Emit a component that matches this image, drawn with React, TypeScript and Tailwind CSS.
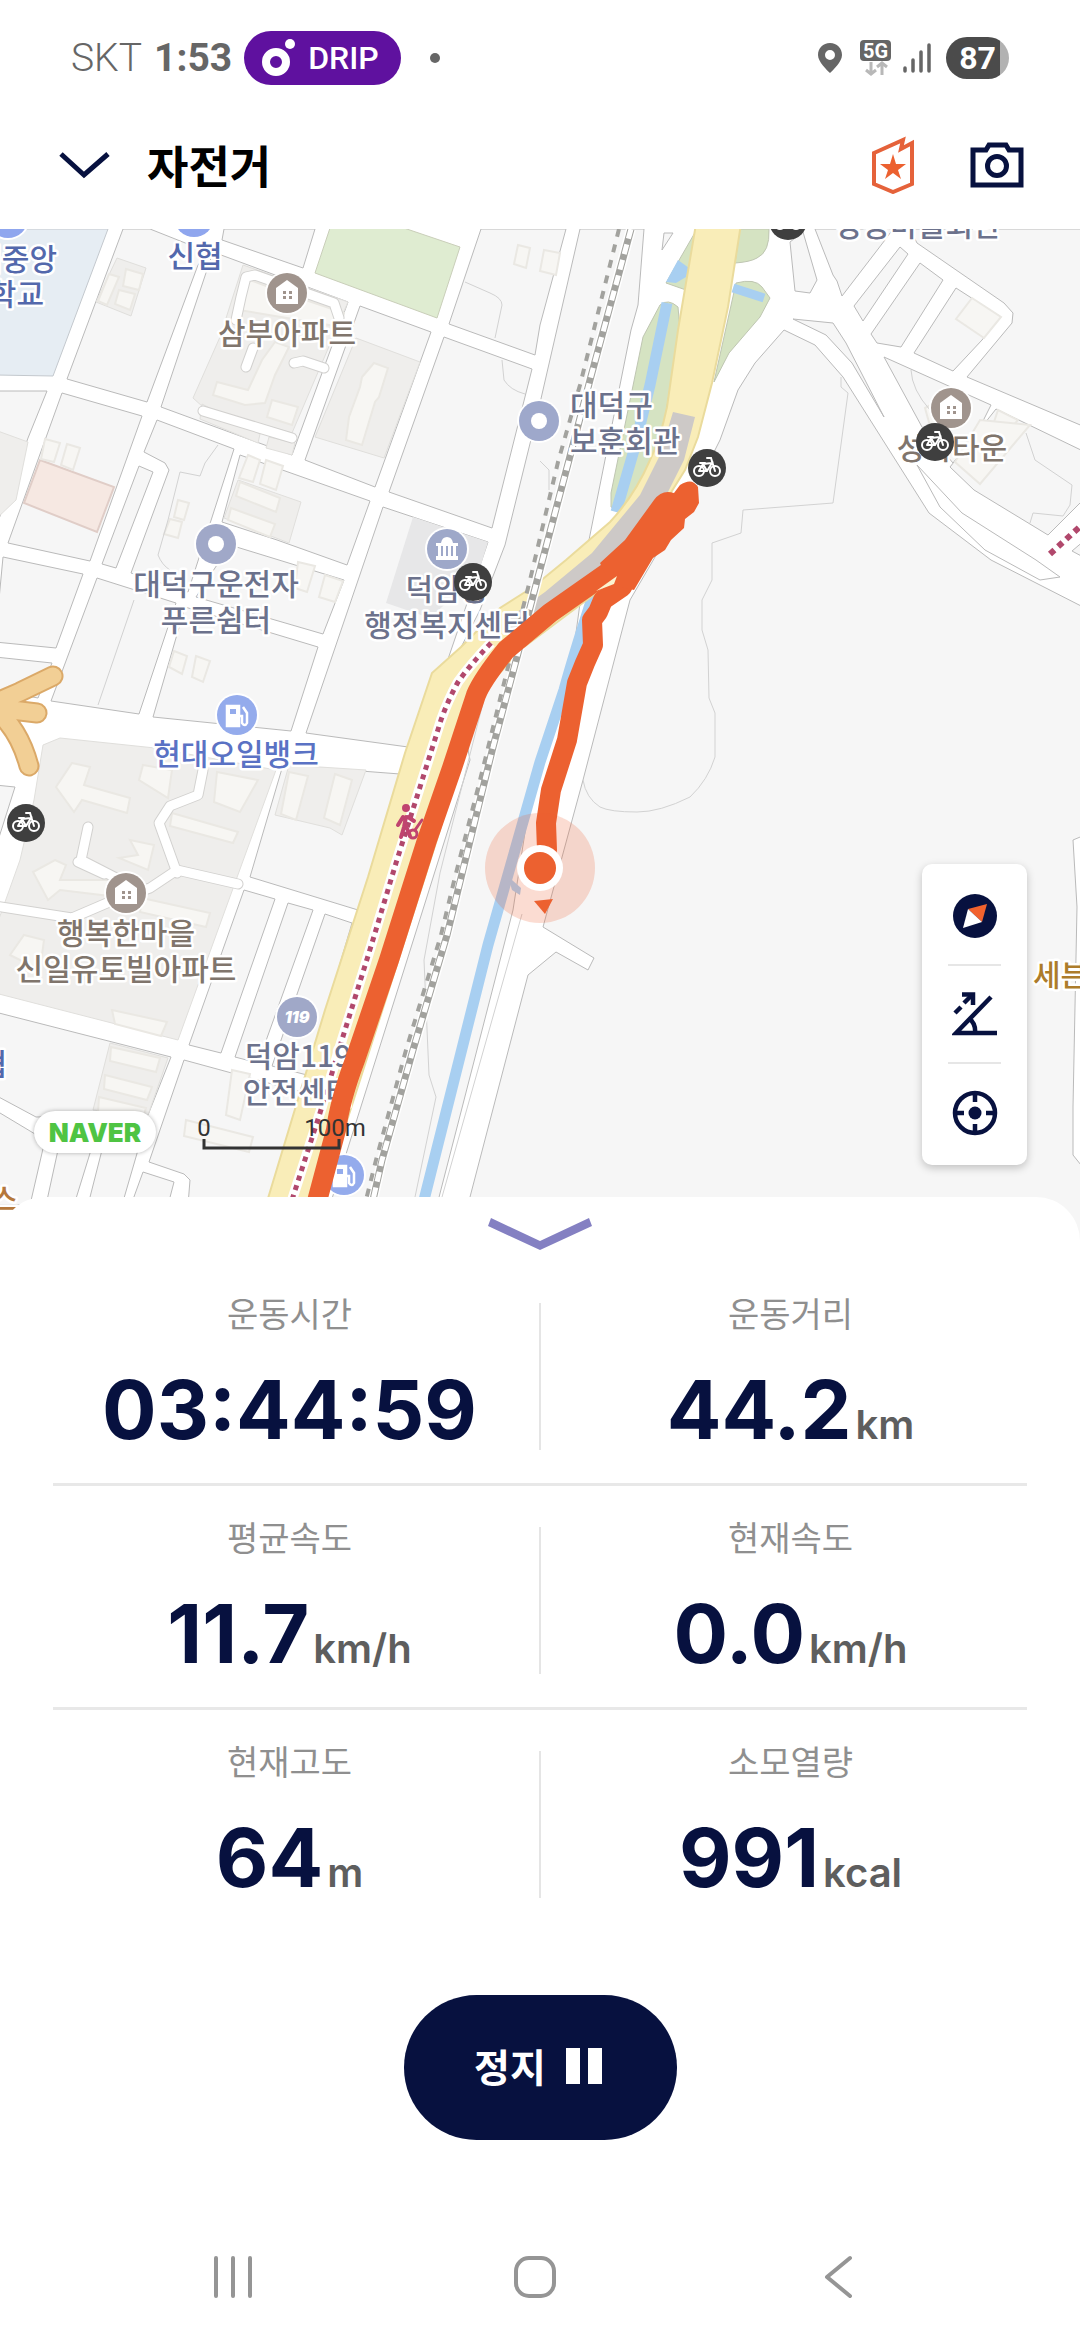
import { ReactNode } from "react";

type StatProps = { label: string; value: string; unit?: string };

type PoiProps = {
  x: number;
  y: number;
  color: string;
  children?: ReactNode;
};

type LabelProps = {
  x: number;
  y: number;
  color: string;
  lines: string[];
  anchor?: "start" | "middle" | "end";
};

const BLOCKS = [
  "123,229 150,229 208,252 198,265 147,402 67,379",
  "161,407 213,252 348,302 292,455",
  "224,229 222,240 303,268 315,229",
  "481,229 449,324 535,355 540,325 566,229",
  "444,337 532,369 492,528 389,492",
  "360,306 431,332 375,487 305,460",
  "-5,391 47,391 28,438 -5,530",
  "62,393 142,416 90,561 8,543",
  "139,466 153,472 116,568 102,564",
  "157,420 234,449 188,592 131,573 169,470 165,463 144,452",
  "240,455 370,501 347,565 277,540 222,522",
  "230,545 344,580 323,634 196,597",
  "383,507 488,542 447,662 430,690 408,747 306,733",
  "3,557 83,574 56,648 -5,642",
  "97,578 176,603 139,714 51,701",
  "-5,657 52,663 38,698 -5,690",
  "185,607 318,647 291,731 153,717",
  "-5,785 15,787 -5,850",
  "283,765 400,774 358,910 250,877",
  "244,890 275,899 221,1053 189,1045",
  "288,903 313,910 258,1063 235,1057",
  "325,914 352,923 307,1075 272,1066",
  "-5,1012 171,1057 148,1115 36,1117 -5,1095",
  "184,1060 305,1093 268,1205 188,1205 190,1180 184,1174 149,1162",
  "-5,1110 45,1140 30,1205 -5,1205",
  "58,1150 91,1150 74,1205 46,1205",
  "102,1150 138,1150 122,1205 88,1205",
  "143,1172 174,1182 168,1205 131,1205",
  "580,229 644,229 638,305 631,330 588,545 575,640 530,800 513,910 437,1205 330,1205 470,760 452,665 480,610 505,545 540,403",
  "784,330 815,345 843,377 929,513 991,560 1085,608 1085,1260 460,1260 470,1197 528,975 556,952 588,970 594,958 543,927 583,780 630,600 655,557 700,480 720,440 738,390 755,363",
  "815,229 833,275 837,281 842,296 885,240 893,229",
  "790,242 803,232 817,280 810,293 795,291",
  "900,247 908,254 863,321 854,306",
  "920,263 943,280 901,347 877,343 871,334",
  "956,288 1001,317 982,340 953,371 914,353",
  "910,229 917,243 1004,303 1013,313 1012,323 967,377 1085,427 1085,229",
  "884,357 991,405 977,433 953,463 922,427",
  "996,409 1085,452 1085,498 1048,535 974,490 950,467",
  "664,233 673,233 662,250",
  "1085,540 1072,551 1085,558",
];

const COMPLEXES = [
  "243,265 348,302 292,433 203,407 193,398 220,337",
  "356,338 420,362 384,458 315,437",
  "117,258 146,268 131,316 96,302",
  "238,480 301,502 289,543 224,518",
  "-5,430 28,442 16,500 -5,520",
  "43,745 60,738 155,748 276,770 178,1040 -5,993 -5,930 20,860 34,800",
  "289,765 366,770 342,835 330,828 275,815",
  "110,1043 168,1058 148,1115 93,1110",
  "202,404 260,434 258,443 200,419",
  "269,437 295,443 292,455 266,448",
];

const BUILDINGS = [
  "250,280 282,292 344,313 341,327 239,310",
  "275,342 289,347 275,375 265,403 245,405 213,395 217,382 248,390 262,360",
  "272,400 298,407 292,425 267,417",
  "374,363 388,368 379,397 375,402 362,445 346,440 349,417 360,387 362,377",
  "109,274 119,277 107,305 98,301",
  "126,269 143,274 139,290 123,286",
  "119,290 135,294 130,310 115,304",
  "240,482 280,498 276,512 236,496",
  "231,508 275,524 270,537 228,520",
  "45,439 60,443 54,462 41,459",
  "67,444 80,448 73,470 61,465",
  "248,455 260,460 253,482 239,478",
  "266,460 283,466 276,490 260,484",
  "178,500 189,503 184,520 174,517",
  "170,519 182,522 178,538 164,534",
  "298,562 315,566 307,592 295,588",
  "325,575 343,581 335,602 319,597",
  "174,651 187,656 182,674 169,667",
  "196,656 210,661 203,682 192,677",
  "72,763 90,767 84,785 130,798 127,813 82,800 74,812 56,787",
  "143,765 172,770 168,798 139,780",
  "172,813 238,832 233,843 170,826",
  "130,840 154,845 148,870 119,858 138,855",
  "217,772 258,780 240,812 214,802",
  "289,772 308,776 296,820 281,814",
  "335,774 352,780 340,825 324,818",
  "55,860 66,865 60,880 110,880 110,896 60,890 48,900 33,872",
  "142,898 210,913 206,927 140,912",
  "24,935 44,940 40,970 10,955",
  "112,1010 167,1022 161,1036 115,1024",
  "111,1047 160,1058 156,1072 110,1061",
  "105,1075 152,1087 147,1100 104,1089",
  "99,1097 146,1108 142,1122 98,1112",
  "186,1120 253,1137 249,1152 184,1136",
  "232,1070 250,1074 240,1120 226,1115",
  "972,298 1001,317 984,338 956,319",
  "544,250 560,253 556,275 540,271",
  "518,245 530,248 526,268 514,264",
  "925,408 940,400 948,420 932,433",
  "998,410 1018,420 1008,432 993,425",
  "980,420 1030,425 980,484 955,462",
];

const SERVICE_ROADS = [
  "M339 318L334 303L255 275L246 277L241 297L236 320",
  "M253 348L246 367",
  "M203 411L292 438",
  "M294 363L303 361L324 368",
  "M203 770L198 795L170 806L159 823L177 873",
  "M88 827L81 860L120 880",
  "M78 862L104 874",
  "M-5 906L72 918L107 903L150 888L177 870L238 884",
];

const FAINT_LINES = [
  "M841 377V387L848 393L833 503L743 510L741 533L712 543V580L702 600V630L708 650L709 698L715 713V757Q708 780 690 797Q660 812 637 812Q610 812 600 807Q586 798 583 780",
  "M483 703L440 873L424 960L429 1075L436 1097L415 1197",
  "M465 282L490 293Q502 298 502 305L495 338",
  "M502 360L504 380Q510 390 525 394",
  "M218 445L205 463L200 476L180 472L168 520L158 555Q162 565 170 570",
  "M134 600L98 705",
  "M1026 433L1035 460L1072 485L1070 505L1063 516L1033 513L1030 523",
  "M911 370Q912 390 930 410",
  "M522 914L442 1197",
  "M540 461L549 470V490",
];

const ROUTE_MAIN =
  "M316 1205L336 1130Q340 1100 355 1060L389 960L427 840L452 768L476 695Q482 680 506 650L550 613L607 573L650 530";
const ROUTE_RETURN =
  "M650 545L630 570L622 587L603 600L598 612L592 620L593 645L585 663L577 683L567 740L551 790L546 823L547 850L540 868";
const RAIL =
  "M631 229L590 380L569 460L542 562L517 657L493 747L447 935L413 1050L382 1160L373 1200";
const RAIL_DASH =
  "M619 229L580 385L558 462L530 580L508 667L480 780L455 877L441 935L406 1050L376 1160L366 1200";
const WALKWAY =
  "M491 643Q470 665 458 682Q448 700 441 720L420 787L396 863L372 943L341 1043L320 1113L292 1200";

const BROWN = "#80756c";
const SLATE = "#6c728c";
const BLUE = "#5368ac";

const Poi = ({ x, y, color, children }: PoiProps) => (
  <g transform={`translate(${x} ${y})`}>
    <circle r="22" fill="#fff" />
    <circle r="20" fill={color} />
    {children ?? <circle r="8" fill="#fff" />}
  </g>
);

const HouseGlyph = () => (
  <>
    <path d="M0 -13L11 -5V11H-11V-5Z" fill="#fff" />
    <path d="M-4 -2h3v3h-3zM2 -2h3v3h-3zM-4 3h3v3h-3zM2 3h3v3h-3z" fill="#a0948d" />
  </>
);

const FuelGlyph = () => (
  <g fill="none" stroke="#fff" strokeWidth="2.5">
    <path d="M-10 11V-9H2V11Z" fill="#fff" />
    <path d="M-7 -6H-1V-1H-7Z" fill="#94abec" stroke="none" />
    <path d="M2 1H5V8Q8 12 10 8V-2L6 -8" />
  </g>
);

const HallGlyph = () => (
  <g fill="#fff">
    <path d="M-6 -6Q-5 -12 0 -12Q5 -12 6 -6H11V-3H-11V-6Z" />
    <path d="M-9 -3h3V7h-3zM-4 -3h3V7h-3zM1 -3h3V7h-3zM6 -3h3V7h-3zM-11 7h22v4h-22z" />
  </g>
);

const BikeMarker = ({ x, y }: { x: number; y: number }) => (
  <g transform={`translate(${x} ${y})`}>
    <circle r="19" fill="#3f3f3f" />
    <g fill="none" stroke="#fff" strokeWidth="2" strokeLinecap="round">
      <circle cx="-8" cy="3" r="5" />
      <circle cx="8" cy="3" r="5" />
      <path d="M-8 3L-4 -4L5 -5L0 3H-8M-4 -4L0 3M8 3L4 -10H0M-7 -5H-2" />
    </g>
  </g>
);

const MapLabel = ({ x, y, color, lines, anchor = "middle" }: LabelProps) => (
  <text
    textAnchor={anchor}
    fill={color}
    stroke="#fff"
    strokeWidth="5"
    strokeLinejoin="round"
    paintOrder="stroke"
    className="font-['Noto_Sans_CJK_KR',sans-serif] text-[30px] font-medium"
  >
    {lines.map((line, i) => (
      <tspan key={line} x={x} y={y + i * 36}>
        {line}
      </tspan>
    ))}
  </text>
);

const RideMap = () => (
  <svg viewBox="0 229 1080 1012" className="block w-full bg-white" role="img" aria-label="지도">
    <polygon points="-5,229 108,229 53,376 -5,375" fill="#e6edf3" stroke="#c3c8cd" />
    <g fill="#f6f6f6" stroke="#bababa">
      {BLOCKS.map((points) => (
        <polygon key={points} points={points} />
      ))}
    </g>
    <polygon points="331,225 315,273 437,318 460,247 395,225" fill="#dfecd1" stroke="#c9ceb9" />
    <polygon points="413,517 488,542 470,600 455,595 430,618 386,603" fill="#e7e7e8" />
    <g fill="#efeeec" stroke="#e0dfdc">
      {COMPLEXES.map((points) => (
        <polygon key={points} points={points} />
      ))}
    </g>
    <polygon points="40,460 114,487 97,532 24,503" fill="#f6e8e2" stroke="#e0cdc7" strokeWidth="2" />
    <g fill="#f7f6f3" stroke="#eae8e3" strokeWidth="2">
      {BUILDINGS.map((points) => (
        <polygon key={points} points={points} />
      ))}
    </g>
    <g fill="none" strokeLinecap="round" strokeLinejoin="round">
      {SERVICE_ROADS.map((d) => (
        <path key={d} d={d} stroke="#d2d1cf" strokeWidth="11" />
      ))}
      {SERVICE_ROADS.map((d) => (
        <path key={d} d={d} stroke="#fff" strokeWidth="9" />
      ))}
    </g>
    <g fill="none" stroke="#d2d2d2">
      {FAINT_LINES.map((d) => (
        <path key={d} d={d} />
      ))}
    </g>

    {/* junction and slip road outlines */}
    <g fill="#f6f6f6" stroke="#bababa">
      <path d="M793 319L833 323L846 343L884 417L852 363L826 335Z" />
      <path d="M917 465L962 513L1036 560L1060 577L1040 580L985 550L940 507Z" fill="#fff" />
    </g>

    {/* green strips and canal */}
    <g fill="#d5e3c2" stroke="#bfc6b2">
      <polygon points="697,229 678,262 666,283 686,290" />
      <path d="M643 337L660 305Q668 298 678 307L680 330L659 453L623 512L611 507L611 493Z" />
      <path d="M735 263L740 229H769Q770 252 757 258Q750 262 735 263Z" />
      <path d="M714 382L736 283Q755 278 762 287L770 298L760 317L729 353Z" />
    </g>
    <g fill="none" stroke="#a8cff1">
      <path d="M667 303L650 385L634 450L616 512" strokeWidth="11" />
      <path d="M733 288L764 298" strokeWidth="9" />
      <path d="M598 580Q575 650 564 690L540 762L488 945L424 1200" strokeWidth="11" />
    </g>
    <polygon points="678,260 689,268 686,277 676,283 666,282" fill="#a8cff1" />
    <polygon points="512,880 521,888 520,895 512,890 509,880" fill="#a8cff1" />

    {/* trunk road */}
    <path
      d="M696 224L678 330L667 407Q660 440 650 460Q635 495 610 522L566 560L533 587L500 608L461 647L432 673L405 753L368 877L325 1010L266 1205H320L440 830L476 700L520 650L600 590L660 510L685 470L698 437L712 383L728 307L741 224Z"
      fill="#f9edb8"
      stroke="#eadb9c"
      strokeWidth="2"
    />
    <polygon
      points="673,412 695,417 684,460 664,500 600,585 520,640 503,622 545,592 592,553 640,495 660,455"
      fill="#cdc9c7"
    />

    {/* railway */}
    <g fill="none">
      <path d={RAIL} stroke="#fff" strokeWidth="10" />
      <path d={RAIL} stroke="#a2a29e" strokeWidth="7" />
      <path d={RAIL} stroke="#fff" strokeWidth="5" strokeDasharray="10 6" />
      <path d={RAIL_DASH} stroke="#a2a29e" strokeWidth="4" strokeDasharray="8 8" />
      <path d={WALKWAY} stroke="#fff" strokeWidth="10" />
      <path d={WALKWAY} stroke="#b1486c" strokeWidth="5" strokeDasharray="5 5" />
      <path d="M1050 554L1085 522" stroke="#b1486c" strokeWidth="6" strokeDasharray="6 5" />
    </g>
    <g fill="none" stroke="#c0436f" strokeWidth="4" strokeLinecap="round">
      <circle cx="406" cy="808" r="2" fill="#c0436f" />
      <path d="M406 817L404 827L401 837M406 826L410 836M403 817L398 825M408 817L414 821" />
      <circle cx="413" cy="834" r="4" strokeWidth="3" />
      <path d="M415 830L422 820" strokeWidth="3" />
    </g>

    {/* landmark hand */}
    <g fill="none" strokeLinecap="round">
      <path d="M-12 706L20 692L53 676M-5 708L37 713M-10 706Q18 725 29 766" stroke="#dba968" strokeWidth="21" />
      <path d="M-12 706L20 692L53 676M-5 708L37 713M-10 706Q18 725 29 766" stroke="#f2cf95" strokeWidth="17" />
    </g>

    <Poi x={8} y={218} color="#8fa6ee" />
    <Poi x={194} y={217} color="#8fa6ee" />
    <Poi x={287} y={293} color="#a0948d">
      <HouseGlyph />
    </Poi>
    <Poi x={539} y={421} color="#9ea8cb" />
    <Poi x={216} y={544} color="#a0a8c8" />
    <Poi x={447} y={549} color="#9ea8c9">
      <HallGlyph />
    </Poi>
    <Poi x={237} y={715} color="#94abec">
      <FuelGlyph />
    </Poi>
    <Poi x={126} y={893} color="#a0948d">
      <HouseGlyph />
    </Poi>
    <Poi x={951} y={408} color="#a0948d">
      <HouseGlyph />
    </Poi>
    <Poi x={344} y={1175} color="#94abec">
      <FuelGlyph />
    </Poi>
    <Poi x={297} y={1017} color="#a0a8c8">
      <text
        y="6"
        textAnchor="middle"
        fill="#fff"
        className="font-['Inter',sans-serif] text-[16px] font-black italic"
      >
        119
      </text>
    </Poi>

    <MapLabel x={57} y={270} anchor="end" color={BLUE} lines={["덕중앙"]} />
    <MapLabel x={44} y={305} anchor="end" color={BLUE} lines={["학교"]} />
    <MapLabel x={195} y={267} color={BLUE} lines={["신협"]} />
    <MapLabel x={287} y={344} color={BROWN} lines={["삼부아파트"]} />
    <MapLabel x={570} y={416} anchor="start" color={SLATE} lines={["대덕구", "보훈회관"]} />
    <MapLabel x={216} y={595} color={SLATE} lines={["대덕구운전자", "푸른쉼터"]} />
    <MapLabel x={447} y={600} color={SLATE} lines={["덕암동", "행정복지센터"]} />
    <MapLabel x={236} y={765} color="#5a72c4" lines={["현대오일뱅크"]} />
    <MapLabel x={126} y={944} color={BROWN} lines={["행복한마을", "신일유토빌아파트"]} />
    <MapLabel x={298} y={1067} color={SLATE} lines={["덕암119", "안전센터"]} />
    <MapLabel x={918} y={236} color={SLATE} lines={["장동마을회관"]} />
    <MapLabel x={952} y={459} color={BROWN} lines={["성락타운"]} />
    <MapLabel x={7} y={1075} anchor="end" color={BLUE} lines={["신협"]} />
    <MapLabel x={18} y={1210} anchor="end" color="#b5783c" lines={["스"]} />
    <path d="M1085 835L1073 840L1077 907L1073 1107V1155L1085 1170Z" fill="#fff" stroke="#bababa" />
    <MapLabel x={1033} y={986} anchor="start" color="#ad7c2a" lines={["세븐일레븐"]} />

    <BikeMarker x={788} y={221} />
    <BikeMarker x={707} y={468} />
    <BikeMarker x={935} y={442} />
    <BikeMarker x={473} y={582} />
    <BikeMarker x={26} y={823} />

    {/* recorded route */}
    <g fill="none" stroke="#ec6130" strokeWidth="20" strokeLinejoin="round">
      <path d={ROUTE_MAIN} />
      <path d={ROUTE_RETURN} />
    </g>
    <path
      d="M654 500Q662 489 674 493L680 485Q692 477 698 487L699 503L694 512L685 519L684 528L671 540L665 550L653 558L634 590L622 587L606 575L600 563L625 540Z"
      fill="#ec6130"
    />
    <path d="M617 576L614 584L596 591Z" fill="#fbf3d0" />

    <circle cx="540" cy="868" r="55" fill="#ec6130" fillOpacity="0.22" />
    <circle cx="540" cy="868" r="23" fill="#fff" />
    <circle cx="540" cy="868" r="16" fill="#ec6130" />
    <path d="M534 901L553 899L545 914Z" fill="#ec6130" />

    <path d="M204 1139V1148H339V1139" fill="none" stroke="#333" strokeWidth="3" />
    <g fill="#333" textAnchor="middle" className="font-['Roboto',sans-serif] text-[24px]">
      <text x="204" y="1136">0</text>
      <text x="335" y="1136">100m</text>
    </g>
  </svg>
);

const StatusBar = () => (
  <div className="flex h-[116px] items-center justify-between pr-[71px] pl-[71px] font-['Roboto',sans-serif] text-[#666]">
    <div className="flex items-center">
      <span className="text-[39px] font-light">SKT</span>
      <span className="ml-3 text-[39px] font-bold">1:53</span>
      <span className="ml-3 flex h-[54px] w-[157px] items-center gap-3 rounded-full bg-[#5f119f] pl-[18px] text-white">
        <svg viewBox="0 0 34 40" className="h-10 w-[34px]">
          <circle cx="14" cy="24" r="10" fill="none" stroke="currentColor" strokeWidth="8" />
          <circle cx="28" cy="6" r="5" fill="currentColor" />
        </svg>
        <span className="text-[32px] font-medium">DRIP</span>
      </span>
      <span className="ml-[29px] size-[10px] rounded-full bg-[#666]" />
    </div>
    <div className="flex items-center">
      <svg viewBox="0 0 26 32" className="h-8 w-[26px]">
        <path
          d="M13 1C6 1 1 6 1 13C1 20 10 28 13 31C16 28 25 20 25 13C25 6 20 1 13 1ZM13 8A5 5 0 1 1 13 18A5 5 0 1 1 13 8Z"
          fill="currentColor"
          fillRule="evenodd"
        />
      </svg>
      <div className="ml-[17px] flex w-[31px] flex-col items-center">
        <span className="flex h-[21px] w-full items-center justify-center rounded-[4px] bg-[#666] text-[20px] font-bold text-white">
          5G
        </span>
        <svg viewBox="0 0 24 15" className="h-[15px] w-6 text-[#b8b8b8]">
          <path
            d="M7 1V13M2 9L7 13L12 9M18 14V2M13 6L18 2L23 6"
            fill="none"
            stroke="currentColor"
            strokeWidth="3"
          />
        </svg>
      </div>
      <svg viewBox="0 0 28 30" className="ml-3 h-[30px] w-7">
        <path
          d="M2 25V28M10 17V28M18 9V28M26 2V28"
          stroke="currentColor"
          strokeWidth="3.5"
          strokeLinecap="round"
        />
      </svg>
      <span className="ml-[15px] flex h-[42px] w-[63px] items-center justify-center overflow-hidden rounded-full bg-linear-to-r from-[#4b4b4b] from-86% to-[#b2b2b2] to-86% text-[32px] font-bold text-white">
        87
      </span>
    </div>
  </div>
);

const Header = () => (
  <header className="flex h-[113px] items-center pr-14 pb-4 pl-[58px]">
    <button type="button" aria-label="접기">
      <svg viewBox="0 0 53 30" className="h-[30px] w-[53px]">
        <path d="M3 4L26 25L50 4" fill="none" stroke="#07113f" strokeWidth="5" />
      </svg>
    </button>
    <h1 className="ml-9 text-[45px] leading-none font-bold text-black">자전거</h1>
    <button type="button" aria-label="챌린지" className="ml-auto">
      <svg viewBox="0 0 44 58" className="h-[58px] w-11">
        <path
          d="M3 17L32 4L30 13L41 7V48L22 56L3 48Z"
          fill="none"
          stroke="#e5623a"
          strokeWidth="4"
        />
        <path
          d="M22 18L25 28H35L27 34L30 43L22 37L14 43L17 34L9 28H19Z"
          fill="#ec6130"
        />
      </svg>
    </button>
    <button type="button" aria-label="사진 촬영" className="ml-[55px]">
      <svg viewBox="0 0 54 48" className="h-12 w-[54px]">
        <path
          d="M3 9H16L19 4H36L39 9H51V44H3Z"
          fill="none"
          stroke="#07113f"
          strokeWidth="5"
        />
        <circle cx="27" cy="25" r="9.5" fill="none" stroke="#07113f" strokeWidth="5" />
      </svg>
    </button>
  </header>
);

const MapControls = () => (
  <div className="absolute right-[53px] bottom-[76px] flex w-[105px] flex-col items-center rounded-[10px] bg-white shadow-[0_3px_8px_rgba(0,0,0,0.22)]">
    <button type="button" aria-label="나침반" className="flex h-[100px] w-full items-center justify-center pt-1">
      <svg viewBox="0 0 46 46" className="size-[46px]">
        <circle cx="23" cy="23" r="22" fill="#07113f" />
        <path d="M16 16L35 11L30 29Z" fill="#f2622e" />
        <path d="M16 16L30 29L11 35Z" fill="#fff" />
      </svg>
    </button>
    <span className="h-[2px] w-[53px] bg-[#e6e6e6]" />
    <button type="button" aria-label="기울기" className="flex h-24 w-full items-center justify-center">
      <svg viewBox="0 0 46 46" className="size-[46px]" fill="none" stroke="#07113f" strokeWidth="4.5">
        <path d="M39 6L4 42H45M17 27Q24 33 23 42M3 22L9 16M12 12L20 4" />
        <path d="M10 3.5H21V14" />
      </svg>
    </button>
    <span className="h-[2px] w-[53px] bg-[#e6e6e6]" />
    <button type="button" aria-label="현재 위치" className="flex h-[101px] w-full items-center justify-center pb-1">
      <svg viewBox="0 0 46 46" className="size-[46px]" fill="none" stroke="#07113f" strokeWidth="4.5">
        <circle cx="23" cy="23" r="20" />
        <circle cx="23" cy="23" r="6.5" fill="#07113f" stroke="none" />
        <path d="M23 3V12M23 34V43M3 23H12M34 23H43" />
      </svg>
    </button>
  </div>
);

const Stat = ({ label, value, unit }: StatProps) => (
  <div className="flex flex-1 flex-col items-center">
    <dt className="pt-7 text-[34px] leading-[46px] text-[#8f8f8f]">{label}</dt>
    <dd className="mt-6 flex items-baseline gap-1 font-['Inter',sans-serif] text-[81px] leading-[100px] font-bold text-[#07113f]">
      {value}
      {unit && <span className="text-[40px] font-semibold text-[#5e5e5e]">{unit}</span>}
    </dd>
  </div>
);

const StatRow = ({ stats }: { stats: [StatProps, StatProps] }) => (
  <div className="flex h-[221px] px-10">
    <Stat {...stats[0]} />
    <span className="mt-[41px] h-[147px] w-[2px] bg-[#e5e5e5]" />
    <Stat {...stats[1]} />
  </div>
);

const App = () => {
  return (
    <div className="flex min-h-screen flex-col bg-white font-['Noto_Sans_CJK_KR',sans-serif]">
      <StatusBar />
      <Header />
      <main className="flex flex-col">
        <section className="relative">
          <RideMap />
          <span className="absolute bottom-[88px] left-[34px] flex h-[42px] w-[122px] items-center justify-center rounded-full bg-white font-['Inter',sans-serif] text-[26px] font-black text-[#4fc443] shadow-[0_0_4px_rgba(0,0,0,0.3)]">
            NAVER
          </span>
          <MapControls />
        </section>

        <section className="relative -mt-11 rounded-t-[44px] bg-white">
          <button type="button" aria-label="기록 접기" className="mx-auto flex h-[65px] w-40 justify-center pt-5">
            <svg viewBox="0 0 104 34" className="h-[34px] w-[104px]">
              <path d="M3 1L52 24L101 1L104 9L52 33L0 9Z" fill="#8480c2" />
            </svg>
          </button>
          <dl>
            <StatRow
              stats={[
                { label: "운동시간", value: "03:44:59" },
                { label: "운동거리", value: "44.2", unit: "km" },
              ]}
            />
            <div className="mx-[53px] h-[3px] bg-[#e8e8e8]" />
            <StatRow
              stats={[
                { label: "평균속도", value: "11.7", unit: "km/h" },
                { label: "현재속도", value: "0.0", unit: "km/h" },
              ]}
            />
            <div className="mx-[53px] h-[3px] bg-[#e8e8e8]" />
            <StatRow
              stats={[
                { label: "현재고도", value: "64", unit: "m" },
                { label: "소모열량", value: "991", unit: "kcal" },
              ]}
            />
          </dl>
          <button
            type="button"
            className="mx-auto mt-16 flex h-[145px] w-[273px] items-center justify-center gap-5 rounded-full bg-[#07113f] pr-1 pb-1 text-[39px] font-bold text-white"
          >
            정지
            <svg viewBox="0 0 36 36" className="size-9">
              <path d="M0 0H14V36H0ZM22 0H36V36H22Z" fill="currentColor" />
            </svg>
          </button>
        </section>
      </main>

      <nav className="mt-auto grid h-[126px] grid-cols-3 items-center justify-items-center pr-[91px] pl-[82px] text-[#959595]">
        <button type="button" aria-label="최근 앱">
          <svg viewBox="0 0 44 44" className="size-11">
            <path d="M5 3V41M22 3V41M39 3V41" stroke="currentColor" strokeWidth="4" strokeLinecap="round" />
          </svg>
        </button>
        <button type="button" aria-label="홈">
          <svg viewBox="0 0 44 44" className="size-11">
            <rect x="3" y="3" width="38" height="38" rx="13" fill="none" stroke="currentColor" strokeWidth="4" />
          </svg>
        </button>
        <button type="button" aria-label="뒤로">
          <svg viewBox="0 0 44 44" className="size-11">
            <path
              d="M34 3L11 22L34 41"
              fill="none"
              stroke="currentColor"
              strokeWidth="4"
              strokeLinecap="round"
              strokeLinejoin="round"
            />
          </svg>
        </button>
      </nav>
    </div>
  );
};

export default App;
